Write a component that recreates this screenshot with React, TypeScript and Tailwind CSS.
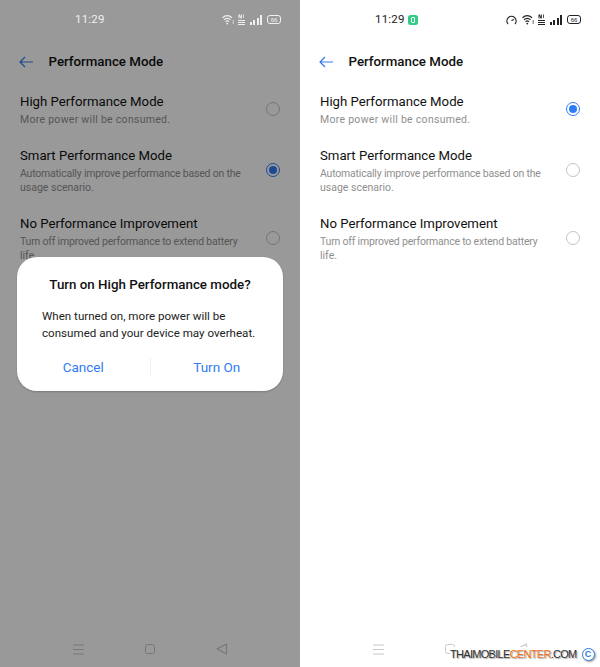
const rows = [
  {
    title: "High Performance Mode",
    desc: [{ text: "More power will be consumed.", fit: "tracking-[0.28px]" }],
  },
  {
    title: "Smart Performance Mode",
    desc: [
      { text: "Automatically improve performance based on the", fit: "tracking-[-0.2px]" },
      { text: "usage scenario.", fit: "tracking-normal" },
    ],
  },
  {
    title: "No Performance Improvement",
    desc: [
      { text: "Turn off improved performance to extend battery", fit: "tracking-[-0.2px]" },
      { text: "life.", fit: "tracking-normal" },
    ],
  },
];

const StatusIcons = ({ gauge }: { gauge?: boolean }) => (
  <div className="flex items-center gap-[4px]">
    {gauge && (
      <svg width="11" height="10" viewBox="0 0 11 10" fill="none" stroke="currentColor" className="mr-[1px]">
        <path d="M2 9 A4.6 4.6 0 1 1 9 9" strokeWidth="1.2" />
        <path d="M5.5 5.5 L8 4.5" strokeWidth="1.2" />
      </svg>
    )}
    {/* wifi */}
    <svg width="12" height="10" viewBox="0 0 12 10" fill="none" stroke="currentColor" strokeWidth="1.2">
      <path d="M0.5 2.8 C3.5 0.2 7 0.2 10 2.8" />
      <path d="M2 4.8 C4 3 6.5 3 8.5 4.8" />
      <path d="M3.6 6.7 C4.6 5.8 5.9 5.8 6.9 6.7" />
      <circle cx="5.3" cy="8.6" r="0.9" fill="currentColor" stroke="none" />
      <path d="M10.5 6 L12 6 M10.5 8 L12 8" strokeWidth="0.9" />
    </svg>
    {/* volte stack */}
    <svg width="7" height="11" viewBox="0 0 7 11" fill="currentColor">
      <path d="M0.5 0.5 H2 L3 3 V0.5 H3.8 V4.5 H2.6 L1.4 2 V4.5 H0.5 Z" />
      <path d="M5 0.5 H5.8 V4 H5 Z" />
      <path d="M0 6 H7 V7 H0 Z M0 8 H7 V9 H0 Z M0 10 H7 V11 H0 Z" />
    </svg>
    {/* signal */}
    <div className="flex items-end gap-[1.5px] h-[10px] ml-[1px]">
      <div className="w-[2px] h-[3px] bg-current" />
      <div className="w-[2px] h-[5px] bg-current" />
      <div className="w-[2px] h-[7px] bg-current" />
      <div className="w-[2px] h-[10px] bg-current" />
    </div>
    {/* battery */}
    <div className="ml-[1px] w-[14px] h-[9px] rounded-[3px] border border-current flex items-center justify-center text-[6px] leading-none font-['Liberation_Sans',sans-serif]">
      66
    </div>
  </div>
);

const Screen = ({ active, dimmed }: { active: number; dimmed?: boolean }) => (
  <div className="relative w-[300px] h-[667px] bg-white flex flex-col overflow-hidden font-['Roboto',sans-serif]">
    {/* status bar */}
    <div
      className={
        dimmed
          ? "relative z-10 h-[38px] shrink-0 flex items-center pt-[1px] text-[#f0f0f0]"
          : "relative z-10 h-[38px] shrink-0 flex items-center pt-[1px] text-[#222222]"
      }
    >
      <span className="ml-[75px] text-[11.5px] w-[27px] tracking-[0.2px]">11:29</span>
      {!dimmed && (
        <div className="ml-[6px] w-[10px] h-[10px] rounded-[2.5px] bg-[#2ecc85] flex items-center justify-center">
          <div className="w-[4px] h-[6px] rounded-[1px] border border-white" />
        </div>
      )}
      <div className="ml-auto mr-[19px]">
        <StatusIcons gauge={!dimmed} />
      </div>
    </div>

    {/* header */}
    <div className="h-[46px] shrink-0 flex items-center pl-[19px] pt-[1px]">
      <svg width="14" height="12" viewBox="0 0 14 12" fill="none" stroke="#3478f0" strokeWidth="1.2">
        <path d="M14 6 H1 M6 1 L1 6 L6 11" />
      </svg>
      <h1 className="ml-[15.5px] text-[13.3px] font-medium text-[#111111]">Performance Mode</h1>
    </div>

    {/* options */}
    <div className="pt-[8px] flex flex-col gap-[19px] flex-1">
      {rows.map((row, i) => (
        <div key={row.title} className="flex items-center pl-[20px] pr-[20px]">
          <div className="flex-1">
            <div className="text-[13.2px] leading-[20px] mb-[1px] text-[#111111]">{row.title}</div>
            {row.desc.map((line) => (
              <div key={line.text} className={`text-[10.5px] leading-[14px] text-[#8f8f8f] ${line.fit}`}>
                {line.text}
              </div>
            ))}
          </div>
          {i === active ? (
            <div className="mb-[2px] w-[14px] h-[14px] rounded-full border-[1.5px] border-[#2f7bf5] flex items-center justify-center">
              <div className="w-[8px] h-[8px] rounded-full bg-[#2f7bf5]" />
            </div>
          ) : (
            <div className="mb-[2px] w-[14px] h-[14px] rounded-full border border-[#c4c4c4]" />
          )}
        </div>
      ))}
    </div>

    {/* nav bar */}
    <div className="h-[36px] shrink-0 flex items-center pl-[73px] text-[#c8c8c8]">
      <svg width="11" height="11" viewBox="0 0 11 11" stroke="currentColor" strokeWidth="1.2">
        <path d="M0 1 H11 M0 5.5 H11 M0 10 H11" />
      </svg>
      <div className="ml-[61px] w-[10px] h-[10px] rounded-[2.5px] border-[1.2px] border-current" />
      <svg width="12" height="12" viewBox="0 0 12 12" fill="none" stroke="currentColor" strokeWidth="1.2" className="ml-[61px]">
        <path d="M1 6 L10.5 1 V11 Z" strokeLinejoin="round" />
      </svg>
    </div>

    {dimmed && <div className="absolute inset-0 bg-black/40" />}
  </div>
);

export default function App() {
  return (
    <div className="relative w-[600px] h-[667px] flex overflow-hidden bg-white">
      <div className="relative">
        <Screen active={1} dimmed />

        {/* dialog */}
        <div className="absolute left-[17px] top-[257px] w-[266px] h-[134px] bg-white rounded-[20px] shadow-[0_1px_2px_rgba(0,0,0,0.2)] font-['Roboto',sans-serif] flex flex-col">
          <div className="pt-[19px] text-center text-[13.35px] leading-[18px] font-medium text-[#111111]">
            Turn on High Performance mode?
          </div>
          <div className="pt-[14px] pl-[25px] text-[11.6px] leading-[17px] text-[#222222]">
            <div>When turned on, more power will be</div>
            <div>consumed and your device may overheat.</div>
          </div>
          <div className="mt-[11px] h-[28px] flex items-center text-[13.5px] text-[#2f7bf5]">
            <div className="flex-1 text-center">Cancel</div>
            <div className="w-px h-[18px] bg-[#f0f0f0]" />
            <div className="flex-1 text-center">Turn On</div>
          </div>
        </div>
      </div>

      <Screen active={0} />

      {/* watermark */}
      <div className="absolute left-[450px] top-[647px] flex items-center font-['Liberation_Sans',sans-serif]">
        <div className="bg-white h-[15px] flex items-center text-[11px] tracking-[-0.7px] text-[#333333] [text-shadow:1px_1px_1px_rgba(0,0,0,0.35)] whitespace-nowrap">
          THAIMOBILE<span className="text-[#f2711c]">CENTER</span>.COM
        </div>
        <div className="ml-[5px] w-[13px] h-[13px] rounded-full border border-[#2f7fe0] text-[#2f7fe0] bg-white flex items-center justify-center text-[9px] font-bold leading-none shadow-[1px_1px_2px_rgba(0,0,0,0.4)]">
          C
        </div>
      </div>
    </div>
  );
}
